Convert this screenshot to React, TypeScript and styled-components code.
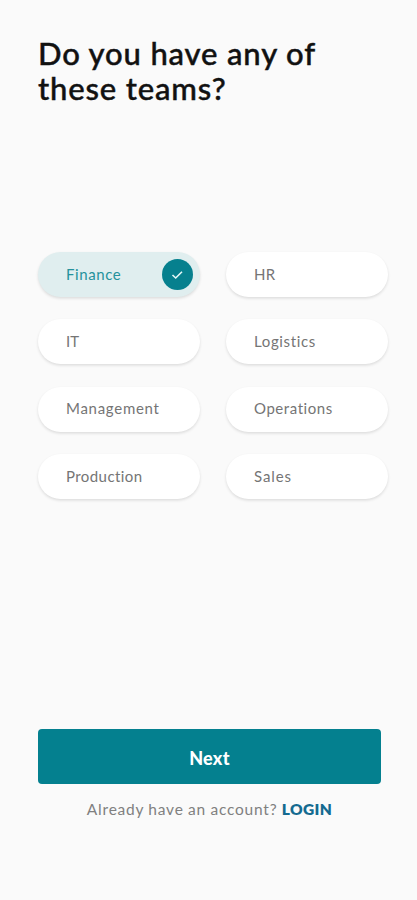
import React, { useState } from "react";
import styled, { createGlobalStyle } from "styled-components";

const GlobalStyle = createGlobalStyle`
  * { box-sizing: border-box; }
  body { margin: 0; background: #fafafa; }
`;

const Screen = styled.main`
  display: flex;
  flex-direction: column;
  width: 417px;
  height: 900px;
  padding: 36px 29px 0 38px;
  background: #fafafa;
  font-family: Lato, "Open Sans", sans-serif;
`;

const Title = styled.h1`
  height: 216px;
  margin: 0;
  color: #111;
  font-size: 31px;
  font-weight: 500;
  line-height: 35px;
  letter-spacing: 0.85px;
  -webkit-text-stroke: 0.45px #111;
`;

const TeamGrid = styled.div`
  display: grid;
  grid-template-columns: 162px 162px;
  grid-auto-rows: 45px;
  gap: 22.4px 26px;
`;

const TeamOption = styled.button<{ $selected: boolean }>`
  display: flex;
  align-items: center;
  justify-content: space-between;
  padding: 0 7px 0 28px;
  border: 0;
  border-radius: 23px;
  background: ${({ $selected }) => ($selected ? "#e0eeef" : "#fff")};
  color: ${({ $selected }) => ($selected ? "#26929c" : "#757575")};
  box-shadow: 0 1.5px 3px rgba(0, 0, 0, 0.12);
  font: inherit;
  font-size: 15px;
`;

const TeamName = styled.span<{ $spacing: number }>`
  margin-top: -2px;
  letter-spacing: ${({ $spacing }) => $spacing}px;
`;

const CheckBadge = styled.span`
  display: flex;
  align-items: center;
  justify-content: center;
  width: 31px;
  height: 31px;
  border-radius: 50%;
  background: #06808e;
`;

const Footer = styled.footer`
  display: flex;
  flex-direction: column;
  align-items: center;
  width: 343px;
  margin-top: 230px;
`;

const NextButton = styled.button`
  width: 100%;
  height: 55px;
  padding: 2px 0 0;
  border: 0;
  border-radius: 4px;
  background: #04808f;
  color: #fff;
  font: inherit;
  font-size: 18px;
  font-weight: 900;
  letter-spacing: 0.3px;
`;

const AccountLine = styled.p`
  margin: 15px 0 0;
  color: #808080;
  font-size: 15.5px;
  line-height: 20px;
  letter-spacing: 0.78px;
  word-spacing: -0.3px;
  white-space: nowrap;
`;

const LoginLink = styled.a`
  color: #146a90;
  font-weight: 800;
  letter-spacing: 0.35px;
`;

const teams = [
  { name: "Finance", spacing: 0.6 },
  { name: "HR", spacing: 0.3 },
  { name: "IT", spacing: 0 },
  { name: "Logistics", spacing: 0.65 },
  { name: "Management", spacing: 0.72 },
  { name: "Operations", spacing: 0.55 },
  { name: "Production", spacing: 0.42 },
  { name: "Sales", spacing: 0.9 },
];

export default function App() {
  const [selected, setSelected] = useState("Finance");
  return (
    <>
      <GlobalStyle />
      <Screen>
        <Title>
          Do you have any of
          <br />
          these teams?
        </Title>
        <TeamGrid>
          {teams.map(({ name, spacing }) => (
            <TeamOption key={name} $selected={name === selected} onClick={() => setSelected(name)}>
              <TeamName $spacing={spacing}>{name}</TeamName>
              {name === selected && (
                <CheckBadge>
                  <svg width="13" height="10" viewBox="0 0 13 10" fill="none" stroke="#e6f8f8" strokeWidth="1.6">
                    <path d="M1.5 5 4.7 8 11 1.7" />
                  </svg>
                </CheckBadge>
              )}
            </TeamOption>
          ))}
        </TeamGrid>
        <Footer>
          <NextButton>Next</NextButton>
          <AccountLine>
            Already have an account? <LoginLink>LOGIN</LoginLink>
          </AccountLine>
        </Footer>
      </Screen>
    </>
  );
}
